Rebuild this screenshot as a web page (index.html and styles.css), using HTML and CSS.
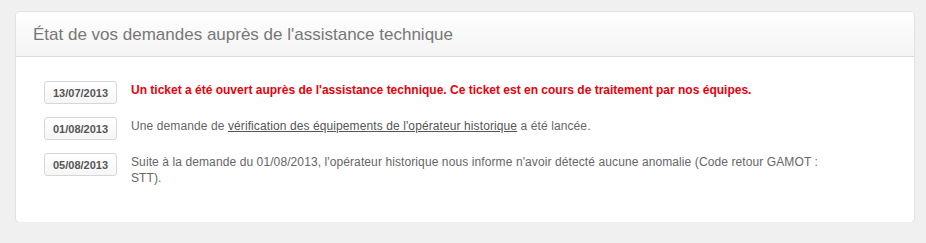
FILE: index.html
```html
<!DOCTYPE html>
<html lang="fr">
<head>
  <meta charset="UTF-8">
  <title>État de vos demandes</title>
  <link rel="stylesheet" href="styles.css">
</head>
<body>
  <div class="panel">
    <div class="panel-head">État de vos demandes auprès de l'assistance technique</div>
    <div class="panel-body">
      <div class="event">
        <span class="date">13/07/2013</span>
        <p class="msg alert">Un ticket a été ouvert auprès de l'assistance technique. Ce ticket est en cours de traitement par nos équipes.</p>
      </div>
      <div class="event">
        <span class="date">01/08/2013</span>
        <p class="msg">Une demande de <a href="#">vérification des équipements de l'opérateur historique</a> a été lancée.</p>
      </div>
      <div class="event">
        <span class="date">05/08/2013</span>
        <p class="msg">Suite à la demande du 01/08/2013, l'opérateur historique nous informe n'avoir détecté aucune anomalie (Code retour GAMOT : STT).</p>
      </div>
    </div>
  </div>
</body>
</html>
```

FILE: styles.css
```css
body {
  font-family: 'Liberation Sans', Arial, sans-serif;
  background: #f0f0f0;
  margin: 0;
  padding: 12px 12px 0 16px;
}
.panel {
  width: 898px;
  background: #fff;
  border-radius: 4px;
  box-shadow: 0 0 0 1px #e2e2e2, 0 1px 2px rgba(0,0,0,0.08);
}
.panel-head {
  height: 44px;
  line-height: 45px;
  padding: 0 17px;
  font-size: 17px;
  color: #777;
  background: linear-gradient(#fefefe, #f4f4f4);
  border-bottom: 1px solid #dcdcdc;
  border-radius: 4px 4px 0 0;
}
.panel-body {
  padding: 24px 27px 36px 28px;
}
.event {
  display: flex;
  align-items: flex-start;
  margin-bottom: 13px;
}
.event:last-child {
  margin-bottom: 0;
}
.date {
  flex: none;
  width: 71px;
  height: 21px;
  line-height: 22px;
  text-align: center;
  font-size: 11px;
  font-weight: bold;
  color: #555;
  background: linear-gradient(#fff, #f6f6f6);
  border: 1px solid #d6d6d6;
  border-radius: 3px;
}
.msg {
  margin: 1px 0 0 14px;
  max-width: 700px;
  font-size: 12px;
  line-height: 16px;
  letter-spacing: 0.1px;
  color: #666;
}
.msg a {
  color: #555;
  text-decoration: underline;
}
.alert {
  color: #e8000b;
  font-weight: bold;
  letter-spacing: 0;
}
```
